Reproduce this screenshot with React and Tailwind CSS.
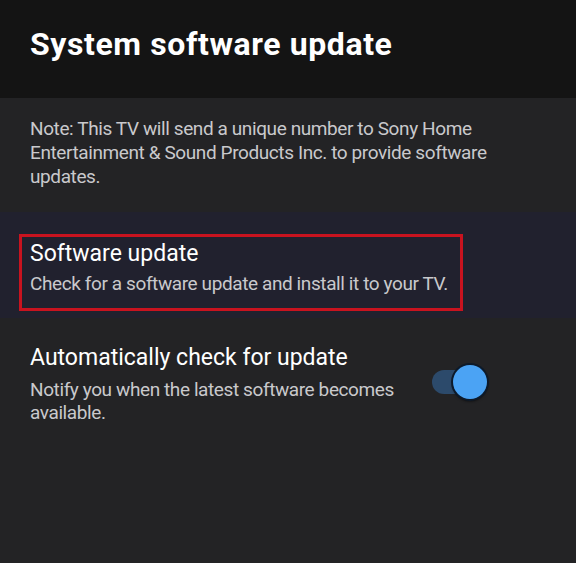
import React from "react";

function Toggle({ on }) {
  return (
    <div className="relative w-[56px] h-[36px] shrink-0">
      <div className="absolute left-0 top-[6px] w-[44px] h-[24px] rounded-full bg-[#2c4a6b]" />
      <div
        className={`absolute top-[1px] w-[34px] h-[34px] rounded-full bg-[#4ba3f4] shadow-[0_2px_3px_rgba(0,0,0,0.8)] ring-2 ring-[#0d1a2a] ${on ? "left-[21px]" : "left-0"}`}
      />
    </div>
  );
}

export default function App() {
  return (
    <div className="w-[576px] h-[563px] bg-[#232325] font-['Roboto',sans-serif] overflow-hidden">
      {/* Header */}
      <div className="h-[98px] bg-[#141414] px-[30px] pt-[24px]">
        <h1 className="text-[32px] leading-[40px] font-bold tracking-[0.6px] text-white">System software update</h1>
      </div>

      {/* Note */}
      <p className="w-[520px] px-[30px] pt-[19px] pb-[23px] text-[19px] leading-[24px] tracking-[-0.4px] text-[#c9c9cc]">
        Note: This TV will send a unique number to Sony Home Entertainment &amp; Sound Products Inc. to provide software
        updates.
      </p>

      {/* Selected item */}
      <div className="bg-[#21212e] pt-[22px] pb-[7px] px-[19px]">
        <div className="w-[444px] h-[77px] border-[3px] border-[#c8131f] pl-[8px] pt-[3px]">
          <div className="text-[23px] leading-[28px] text-white">Software update</div>
          <div className="mt-[2px] text-[19px] leading-[28px] tracking-[-0.4px] whitespace-nowrap text-[#c9c9cc]">
            Check for a software update and install it to your TV.
          </div>
        </div>
      </div>

      {/* Auto check */}
      <div className="flex items-start px-[30px] pt-[25px]">
        <div className="w-[380px]">
          <div className="text-[23px] leading-[30px] text-white">Automatically check for update</div>
          <div className="mt-[5px] text-[19px] leading-[23px] tracking-[-0.4px] text-[#c9c9cc]">
            Notify you when the latest software becomes available.
          </div>
        </div>
        <div className="ml-[22px] mt-[21px]">
          <Toggle on />
        </div>
      </div>
    </div>
  );
}
